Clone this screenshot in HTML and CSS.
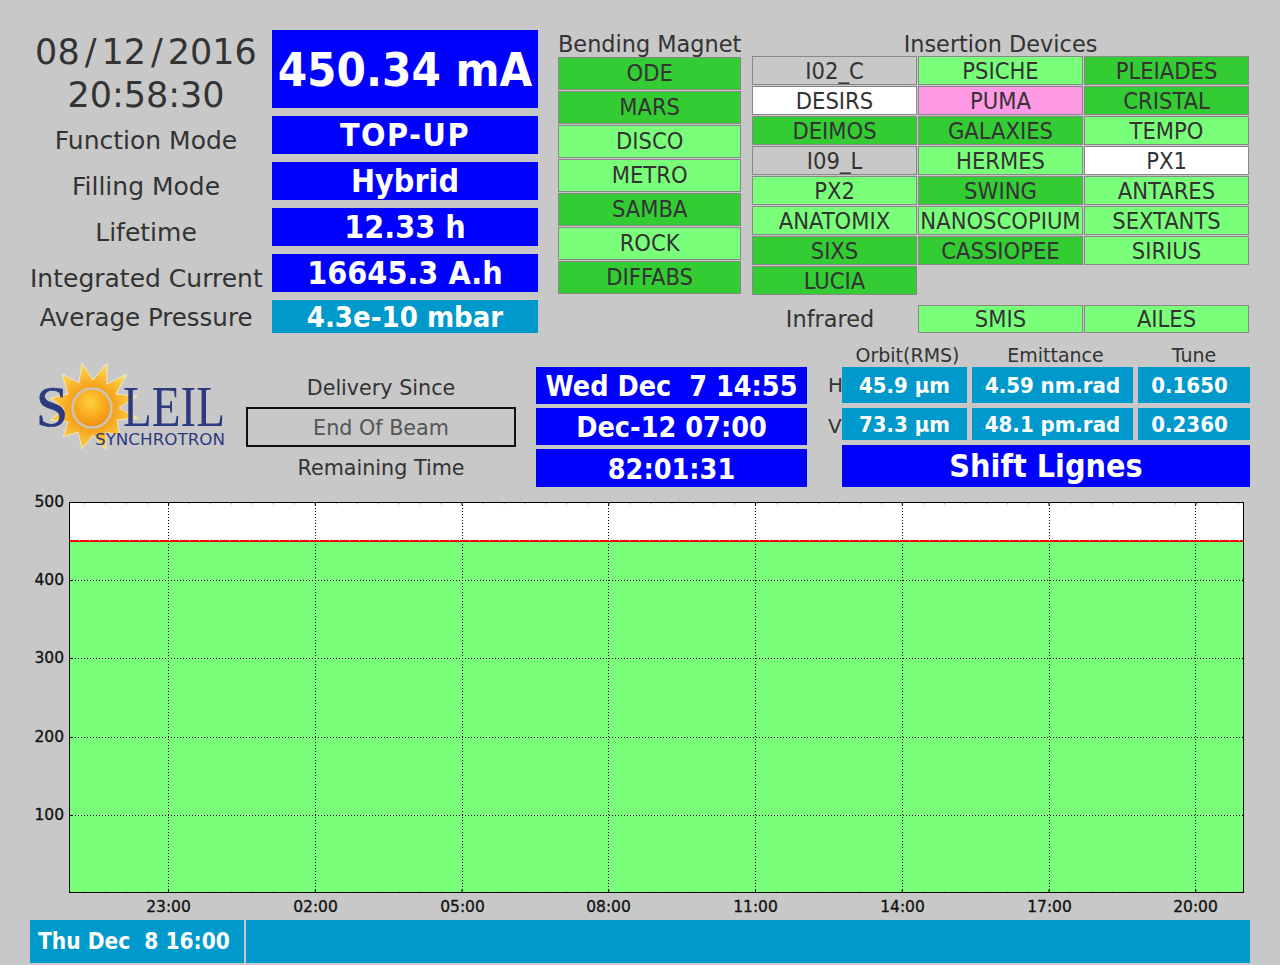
FILE: index.html
```html
<!DOCTYPE html>
<html lang="en">
  <head>
    <meta charset="UTF-8" />
    <title>Machine Status</title>
    <link rel="stylesheet" href="styles.css">
  </head>
  <body>
    <!-- Beam values and beamlines -->
    <section class="top">
      <div class="status">
        <div class="clock">08<span class="slash">/</span>12<span class="slash">/</span>2016<br />20:58:30</div>
        <div class="value value-big">450.34 mA</div>
        <div class="label">Function Mode</div>
        <div class="value value-wide">TOP-UP</div>
        <div class="label">Filling Mode</div>
        <div class="value">Hybrid</div>
        <div class="label">Lifetime</div>
        <div class="value">12.33 h</div>
        <div class="label">Integrated Current</div>
        <div class="value">16645.3 A.h</div>
        <div class="label label-last">Average Pressure</div>
        <div class="value value-cyan value-pressure">4.3e-10 mbar</div>
      </div>
      <div class="bending">
        <h3 class="group-title">Bending Magnet</h3>
        <div class="cell on">ODE</div>
        <div class="cell on">MARS</div>
        <div class="cell open">DISCO</div>
        <div class="cell open">METRO</div>
        <div class="cell on">SAMBA</div>
        <div class="cell open">ROCK</div>
        <div class="cell on">DIFFABS</div>
      </div>
      <div class="insertion">
        <h3 class="group-title">Insertion Devices</h3>
        <div class="device-grid">
          <div class="cell">I02_C</div>
          <div class="cell open">PSICHE</div>
          <div class="cell on">PLEIADES</div>
          <div class="cell white">DESIRS</div>
          <div class="cell pink">PUMA</div>
          <div class="cell on">CRISTAL</div>
          <div class="cell on">DEIMOS</div>
          <div class="cell on">GALAXIES</div>
          <div class="cell open">TEMPO</div>
          <div class="cell">I09_L</div>
          <div class="cell open">HERMES</div>
          <div class="cell white">PX1</div>
          <div class="cell open">PX2</div>
          <div class="cell on">SWING</div>
          <div class="cell open">ANTARES</div>
          <div class="cell open">ANATOMIX</div>
          <div class="cell open">NANOSCOPIUM</div>
          <div class="cell open">SEXTANTS</div>
          <div class="cell on">SIXS</div>
          <div class="cell on">CASSIOPEE</div>
          <div class="cell open">SIRIUS</div>
          <div class="cell on">LUCIA</div>
        </div>
        <div class="device-grid infrared">
          <div class="infrared-title">Infrared</div>
          <div class="cell open">SMIS</div>
          <div class="cell open">AILES</div>
        </div>
      </div>
    </section>

    <!-- Logo, delivery times, beam parameters -->
    <section class="middle">
      <svg class="logo" viewBox="30 345 240 142" width="240" height="142">
        <defs>
          <radialGradient id="rays" gradientUnits="userSpaceOnUse" cx="92" cy="408" r="46">
            <stop offset="0.45" stop-color="#f6a01a" />
            <stop offset="1" stop-color="#ffdc55" />
          </radialGradient>
          <radialGradient id="sun" cx="0.45" cy="0.35" r="0.7">
            <stop offset="0" stop-color="#ffd23c" />
            <stop offset="0.6" stop-color="#f9a51c" />
            <stop offset="1" stop-color="#ee8a12" />
          </radialGradient>
        </defs>
        <polygon fill="url(#rays)" stroke="#f4efd8" stroke-width="0.8"
          points="82,363 93,380 107,363 107,384 127,374 116,394 137,396 119,408 138,418 117,420 120,436 106,432 106,450 93,435 82,449 78,432 63,437 68,422 50,420 64,409 50,398 68,394 62,374 79,383" />
        <text class="logo-big logo-s" x="36" y="426" textLength="32" lengthAdjust="spacingAndGlyphs">S</text>
        <text class="logo-big" x="123" y="426" textLength="102" lengthAdjust="spacingAndGlyphs">LEIL</text>
        <circle cx="92" cy="408" r="19.5" fill="url(#sun)" stroke="#c9c6b8" stroke-width="2.5" />
        <text class="logo-small" x="95" y="445" textLength="130" lengthAdjust="spacingAndGlyphs">SYNCHROTRON</text>
      </svg>
      <div class="delivery">
        <div class="delivery-text">Delivery Since</div>
        <div class="delivery-box">End Of Beam</div>
        <div class="delivery-text">Remaining Time</div>
      </div>
      <div class="times">
        <div class="value value-time">Wed Dec  7 14:55</div>
        <div class="value value-time">Dec-12 07:00</div>
        <div class="value value-time">82:01:31</div>
      </div>
      <div class="params">
        <div></div>
        <div class="param-title param-title-shift">Orbit(RMS)</div>
        <div class="param-title param-title-shift">Emittance</div>
        <div class="param-title">Tune</div>
        <div class="param-axis">H</div>
        <div class="value value-cyan value-param">45.9 µm</div>
        <div class="value value-cyan value-param">4.59 nm.rad</div>
        <div class="value value-cyan value-param value-tune">0.1650</div>
        <div class="param-axis">V</div>
        <div class="value value-cyan value-param">73.3 µm</div>
        <div class="value value-cyan value-param">48.1 pm.rad</div>
        <div class="value value-cyan value-param value-tune">0.2360</div>
        <div class="value value-shift">Shift Lignes</div>
      </div>
    </section>

    <!-- Current history -->
    <svg class="chart" viewBox="0 487 1280 433" width="1280" height="433">
      <rect x="69" y="502" width="1175" height="391" fill="#fff" />
      <rect x="69" y="541" width="1175" height="352" fill="#7aff7a" />
      <g class="grid">
        <line x1="168.5" y1="502" x2="168.5" y2="893" />
        <line x1="315.5" y1="502" x2="315.5" y2="893" />
        <line x1="462.5" y1="502" x2="462.5" y2="893" />
        <line x1="608.5" y1="502" x2="608.5" y2="893" />
        <line x1="755.5" y1="502" x2="755.5" y2="893" />
        <line x1="902.5" y1="502" x2="902.5" y2="893" />
        <line x1="1049.5" y1="502" x2="1049.5" y2="893" />
        <line x1="1195.5" y1="502" x2="1195.5" y2="893" />
        <line x1="69" y1="580.5" x2="1244" y2="580.5" />
        <line x1="69" y1="658.5" x2="1244" y2="658.5" />
        <line x1="69" y1="737.5" x2="1244" y2="737.5" />
        <line x1="69" y1="815.5" x2="1244" y2="815.5" />
      </g>
      <g class="minor">
        <line x1="84" y1="503.5" x2="1244" y2="503.5" />
        <line x1="84" y1="891.5" x2="1244" y2="891.5" />
      </g>
      <g class="major">
        <line x1="168" y1="504" x2="1244" y2="504" />
        <line x1="168" y1="891" x2="1244" y2="891" />
      </g>
      <g class="major-y">
        <line x1="69" y1="580.5" x2="73" y2="580.5" />
        <line x1="69" y1="658.5" x2="73" y2="658.5" />
        <line x1="69" y1="737.5" x2="73" y2="737.5" />
        <line x1="69" y1="815.5" x2="73" y2="815.5" />
      </g>
      <line class="beam" x1="69" y1="541" x2="1244" y2="541" />
      <line class="beam-noise" x1="69" y1="540.5" x2="1244" y2="540.5" />
      <rect class="frame" x="69.5" y="502.5" width="1174" height="390" />
      <g class="axis-y">
        <text x="64" y="507">500</text>
        <text x="64" y="585">400</text>
        <text x="64" y="663">300</text>
        <text x="64" y="742">200</text>
        <text x="64" y="820">100</text>
      </g>
      <g class="axis-x">
        <text x="168.5" y="912">23:00</text>
        <text x="315.5" y="912">02:00</text>
        <text x="462.5" y="912">05:00</text>
        <text x="608.5" y="912">08:00</text>
        <text x="755.5" y="912">11:00</text>
        <text x="902.5" y="912">14:00</text>
        <text x="1049.5" y="912">17:00</text>
        <text x="1195.5" y="912">20:00</text>
      </g>
    </svg>

    <footer class="footer">
      <div class="footer-date">Thu Dec  8 16:00</div>
      <div class="footer-msg"></div>
    </footer>
  </body>
</html>
```

FILE: styles.css
```css
body {
  font-family: "DejaVu Sans", sans-serif;
  margin: 0;
  padding: 30px 30px 0;
  background-color: #c8c8c8;
  color: #333;
  height: 935px;
  overflow: hidden;
}
/* Top block */
.top {
  display: flex;
  height: 315px;
}
.status {
  display: grid;
  grid-template-columns: 232px 266px;
  grid-template-rows: 78px 38px 38px 38px 38px 33px;
  gap: 8px 10px;
  align-self: flex-start;
}
.clock {
  font-size: 35px;
  line-height: 43px;
  padding-top: 1px;
  text-align: center;
  white-space: nowrap;
}
.slash {
  margin: 0 5px;
}
.label {
  font-size: 25px;
  line-height: 38px;
  padding-top: 6px;
  text-align: center;
  white-space: nowrap;
}
.label-last {
  padding-top: 1px;
  font-size: 24.5px;
  line-height: 33px;
}
.value {
  display: flex;
  align-items: center;
  justify-content: center;
  background-color: #0000ff;
  color: #fff;
  font-stretch: condensed;
  font-weight: bold;
  font-size: 32px;
  white-space: pre;
}
.value-big {
  font-size: 47px;
}
.value-wide {
  letter-spacing: 1.5px;
}
.value-cyan {
  background-color: #0099cc;
}
.value-pressure {
  font-size: 29px;
}
/* Beamline cells */
.group-title {
  font-size: 22.4px;
  font-weight: normal;
  height: 26px;
  line-height: 28px;
  margin: 0;
  text-align: center;
  white-space: nowrap;
}
.bending {
  width: 183px;
  margin-left: 20px;
  display: grid;
  grid-template-rows: 26px repeat(7, 33px);
  gap: 1px;
  align-self: flex-start;
}
.bending .cell {
  padding-bottom: 2px;
}
.insertion {
  width: 497px;
  margin-left: 11px;
}
.device-grid {
  display: grid;
  grid-template-columns: 165px 165px 165px;
  grid-auto-rows: 29px;
  gap: 1px;
}
.cell {
  display: flex;
  align-items: center;
  justify-content: center;
  box-sizing: border-box;
  border: 1px solid #888;
  font-stretch: condensed;
  font-size: 23.5px;
  white-space: nowrap;
}
.on {
  background-color: #33cc33;
}
.open {
  background-color: #7aff7a;
}
.white {
  background-color: #fff;
}
.pink {
  background-color: #ff99e6;
}
.infrared {
  margin-top: 10px;
  grid-auto-rows: 28px;
}
.infrared-title {
  font-size: 22.4px;
  line-height: 28px;
  text-align: center;
  padding-right: 9px;
}
/* Middle block */
.middle {
  display: flex;
  height: 142px;
}
.logo {
  display: block;
  flex: none;
  margin-right: -24px;
}
.logo-big {
  font-family: "Liberation Serif", serif;
  font-size: 58px;
  fill: #2c3a80;
}
.logo-s {
  stroke: #2c3a80;
  stroke-width: 0.7;
}
.logo-small {
  font-family: "DejaVu Sans", sans-serif;
  font-stretch: condensed;
  font-size: 16px;
  fill: #2c3a80;
}
.delivery {
  width: 270px;
  margin-top: 22px;
  display: grid;
  grid-template-rows: 40px 40px 40px;
}
.delivery-text {
  font-size: 20.7px;
  line-height: 42px;
  text-align: center;
  white-space: nowrap;
}
.delivery-box {
  box-sizing: border-box;
  border: 2px solid #111;
  color: #555;
  font-size: 20.7px;
  line-height: 38px;
  text-align: center;
}
.times {
  width: 271px;
  margin: 22px 0 0 20px;
  display: grid;
  grid-template-rows: 37px 37px 38px;
  gap: 4px;
  align-self: flex-start;
}
.value-time {
  font-size: 28.5px;
  padding-top: 2px;
}
.params {
  width: 422px;
  margin-left: 21px;
  display: grid;
  grid-template-columns: 9px 125px 161px 112px;
  grid-template-rows: 17px 36px 32px 42px;
  gap: 5px;
  align-self: flex-start;
}
.param-title {
  font-size: 19px;
  line-height: 20px;
  text-align: center;
  white-space: nowrap;
}
.param-title-shift {
  padding-left: 6px;
}
.param-axis {
  font-size: 20px;
  line-height: 36px;
  white-space: nowrap;
}
.value-param {
  font-size: 22px;
}
.value-tune {
  padding-right: 9px;
}
.value-shift {
  grid-column: 2 / 5;
  font-size: 32px;
}
/* Chart */
.chart {
  display: block;
  margin-left: -30px;
  font-size: 15.5px;
}
.grid line {
  stroke: #000;
  stroke-width: 1;
  stroke-dasharray: 1 2;
}
.minor line {
  stroke: #aaa;
  stroke-width: 2;
  stroke-dasharray: 1 19.98;
}
.major line {
  stroke: #000;
  stroke-width: 3;
  stroke-dasharray: 1 145.75;
}
.major-y line {
  stroke: #000;
  stroke-width: 1;
}
.beam {
  stroke: #f00;
  stroke-width: 2;
}
.beam-noise {
  stroke: #fff;
  stroke-width: 1;
  stroke-dasharray: 1 9;
}
.frame {
  fill: none;
  stroke: #000;
  stroke-width: 1;
}
.axis-y text {
  text-anchor: end;
  fill: #111;
  stroke: #111;
  stroke-width: 0.3;
}
.axis-x text {
  text-anchor: middle;
  fill: #111;
  stroke: #111;
  stroke-width: 0.3;
}
/* Bottom bar */
.footer {
  display: flex;
  gap: 2px;
  width: 1220px;
  height: 43px;
}
.footer-date {
  width: 214px;
  box-sizing: border-box;
  padding-left: 8px;
  background-color: #0099cc;
  color: #fff;
  font-stretch: condensed;
  font-weight: bold;
  font-size: 22.5px;
  line-height: 43px;
  white-space: pre;
}
.footer-msg {
  flex: 1;
  background-color: #0099cc;
}
```
